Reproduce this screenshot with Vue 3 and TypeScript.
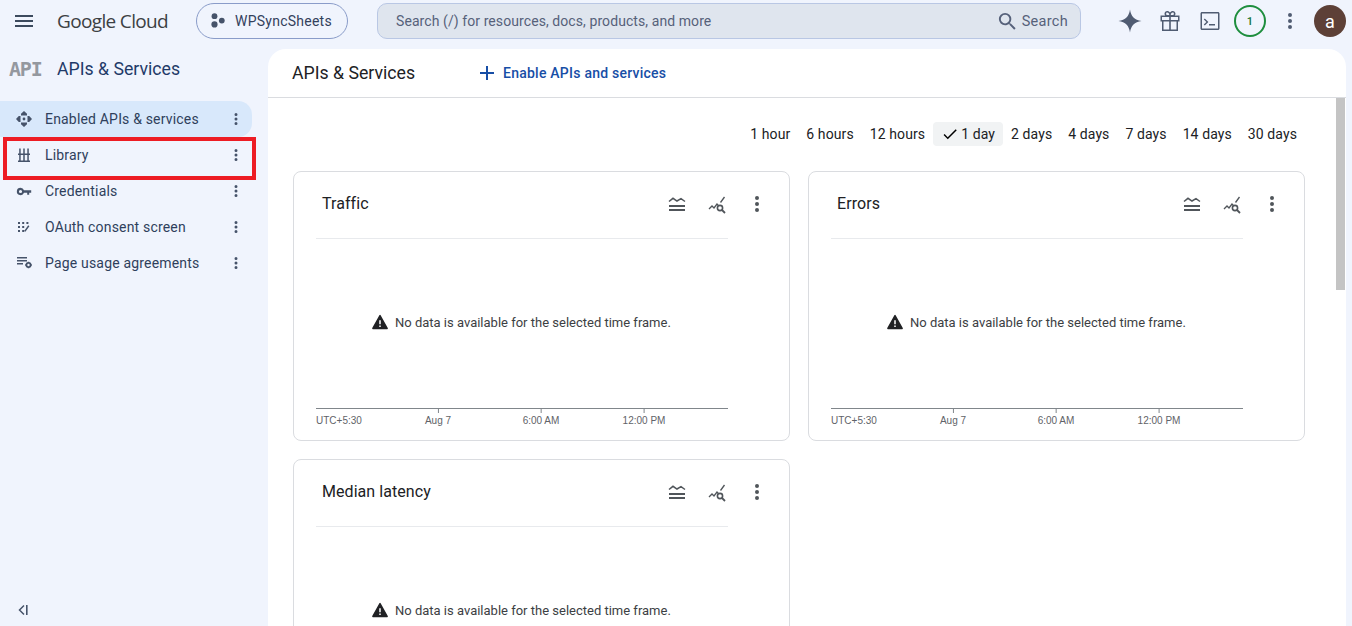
<script setup lang="ts">
const navItems = [
  { label: "Enabled APIs & services", icon: "enabled", active: true },
  { label: "Library", icon: "library", active: false },
  { label: "Credentials", icon: "key", active: false },
  { label: "OAuth consent screen", icon: "oauth", active: false },
  { label: "Page usage agreements", icon: "usage", active: false },
];

const ranges = ["1 hour", "6 hours", "12 hours", "1 day", "2 days", "4 days", "7 days", "14 days", "30 days"];
// the third card's axis sits below the fold, so it has none here
const charts = [
  { title: "Traffic", axis: true },
  { title: "Errors", axis: true },
  { title: "Median latency", axis: false },
];
const ticks = [
  { label: "Aug 7", left: 122 },
  { label: "6:00 AM", left: 225 },
  { label: "12:00 PM", left: 328 },
];
</script>

<template>
  <div class="page">
    <header class="topbar">
      <svg class="menu" width="24" height="24" viewBox="0 0 24 24"><path d="M3 18h18v-2H3zm0-5h18v-2H3zm0-7v2h18V6z" /></svg>
      <span class="logo">Google Cloud</span>
      <button class="project">
        <svg width="16" height="16" viewBox="0 0 16 16"><circle cx="4.5" cy="3.2" r="2.9" /><circle cx="11.8" cy="7.6" r="2.9" /><circle cx="4.5" cy="11.4" r="3.1" /></svg>
        WPSyncSheets
      </button>
      <div class="search">
        <span class="placeholder">Search (/) for resources, docs, products, and more</span>
        <svg width="23" height="23" viewBox="0 0 24 24"><path d="M15.5 14h-.79l-.28-.27A6.47 6.47 0 0 0 16 9.5 6.5 6.5 0 1 0 9.5 16c1.61 0 3.09-.59 4.23-1.57l.27.28v.79l5 4.99L20.49 19l-4.99-5zm-6 0C7.01 14 5 11.99 5 9.5S7.01 5 9.5 5 14 7.01 14 9.5 11.99 14 9.5 14z" /></svg>
        <span class="search-label">Search</span>
      </div>
      <div class="actions">
        <svg class="spark" width="26" height="26" viewBox="0 0 26 26"><path d="M13 1.500C14 8.500 17.500 12 24.500 13 17.500 14 14 17.500 13 24.500 12 17.500 8.500 14 1.500 13 8.500 12 12 8.500 13 1.500z" /></svg>
        <svg width="24" height="24" viewBox="0 0 24 24"><path d="M20 6.500h-3.200c.4-.5.7-1.100.7-1.800C17.500 3.200 16.300 2 14.700 2c-1.100 0-2 .6-2.700 1.500C11.300 2.600 10.400 2 9.300 2 7.700 2 6.500 3.200 6.500 4.700c0 .7.300 1.300.7 1.800H2.500v6H4V22h16v-9.500h1.500v-6zm-5.300-3c.7 0 1.200.6 1.200 1.200 0 .7-.5 1.300-1.200 1.300h-1.900v-.4c0-1 .9-2.100 1.900-2.100zM8.100 4.700c0-.6.500-1.200 1.200-1.200 1 0 1.900 1.100 1.900 2.100V6H9.300c-.7 0-1.200-.6-1.200-1.300zM4 8h7.200v3H4zm1.500 12.500v-8h5.700v8zm13 0h-5.700v-8h5.700zm1.500-9.500h-7.200V8H20z" /></svg>
        <svg width="24" height="24" viewBox="0 0 24 24"><path d="M20 3H4c-.8 0-1.500.7-1.500 1.500v15c0 .8.700 1.500 1.500 1.500h16c.8 0 1.500-.7 1.500-1.500v-15C21.500 3.700 20.800 3 20 3zm0 16.500H4v-15h16zM6.800 16.500l-1-1L8.400 13 5.800 10.500l1-1 3.600 3.500zM11 15h6v1.500h-6z" /></svg>
        <span class="badge">1</span>
        <svg class="more" width="24" height="24" viewBox="0 0 24 24"><path d="M12 8a2 2 0 1 0 0-4 2 2 0 0 0 0 4zm0 2a2 2 0 1 0 0 4 2 2 0 0 0 0-4zm0 6a2 2 0 1 0 0 4 2 2 0 0 0 0-4z" /></svg>
        <span class="avatar">a</span>
      </div>
    </header>

    <div class="body">
      <aside class="sidebar">
        <div class="side-title">
          <span class="api-mark">API</span>
          <span>APIs &amp; Services</span>
        </div>
        <nav class="nav">
          <div v-for="item in navItems" :key="item.label" class="nav-item" :class="{ active: item.active }">
            <svg class="nav-icon" width="18" height="18" viewBox="0 0 18 18">
              <template v-if="item.icon === 'enabled'">
                <path d="M9 1l3 2.800v1.700H6V3.800zM9 17l-3-2.800v-1.700h6v1.700zM1 9l2.800-3h1.700v6H3.800zM17 9l-2.800 3h-1.700V6h1.700z" />
                <circle cx="9" cy="9" r="1.400" />
              </template>
              <template v-else-if="item.icon === 'library'">
                <path d="M4.200 2.500h1.500v5H4.200zM8.250 2.500h1.500v5h-1.500zM12.300 2.500h1.500v5h-1.500zM4.200 9h1.500v5.500H4.200zM8.250 9h1.500v5.500h-1.500zM12.300 9h1.500v5.500h-1.500zM3 7.500h12V9H3zM3 14.500h12V16H3z" />
              </template>
              <template v-else-if="item.icon === 'key'">
                <path d="M5.500 5.800a3.700 3.700 0 1 0 3.500 5h3.200v2h2v-2h2V8.300H9a3.700 3.700 0 0 0-3.500-2.500zm0 2.100a1.600 1.600 0 1 1 0 3.200 1.600 1.600 0 0 1 0-3.200z" />
              </template>
              <template v-else-if="item.icon === 'oauth'">
                <path d="M3 4h2v2H3zM7.200 4h2v2h-2zM11.400 4h2v2h-2zM3 8h2v2H3zM7.200 8h2v2h-2zM3 12h2v2H3zM7.200 12h2v2h-2zM10.400 13.800l4-5.600-1.200-.9-4 5.600z" />
              </template>
              <template v-else>
                <path d="M2 3h10v1.400H2zM2 6h10v1.400H2zM2 9h6v1.400H2z" />
                <circle cx="13.500" cy="11" r="2.100" fill="none" stroke="currentColor" stroke-width="1.800" />
                <path d="M12.800 7.700h1.400v1.400h-1.400zM12.800 12.900h1.400v1.400h-1.400zM10.200 10.300h1.400v1.400h-1.400zM15.400 10.300h1.400v1.400h-1.400z" />
              </template>
            </svg>
            <span class="nav-label">{{ item.label }}</span>
            <svg class="nav-more" width="18" height="18" viewBox="0 0 24 24"><path d="M12 8a2 2 0 1 0 0-4 2 2 0 0 0 0 4zm0 2a2 2 0 1 0 0 4 2 2 0 0 0 0-4zm0 6a2 2 0 1 0 0 4 2 2 0 0 0 0-4z" /></svg>
          </div>
          <div class="highlight"></div>
        </nav>
        <svg class="collapse" width="14" height="14" viewBox="0 0 14 14"><path d="M8 2.500 3.500 7 8 11.500" fill="none" stroke="currentColor" stroke-width="1.500" /><path d="M10 2h1.600v10H10z" /></svg>
      </aside>

      <main class="panel">
        <div class="panel-head">
          <h1>APIs &amp; Services</h1>
          <button class="enable">
            <svg width="18" height="18" viewBox="0 0 18 18"><path d="M8 2h2v6h6v2h-6v6H8v-6H2V8h6z" /></svg>
            Enable APIs and services
          </button>
        </div>
        <div class="panel-scroll">
          <div class="content">
            <div class="ranges">
              <span v-for="r in ranges" :key="r" class="range" :class="{ selected: r === '1 day' }">
                <svg v-if="r === '1 day'" width="18" height="18" viewBox="0 0 24 24"><path d="M9 16.200 4.800 12l-1.400 1.400L9 19 21 7l-1.400-1.400z" /></svg>
                {{ r }}
              </span>
            </div>
            <div class="grid">
              <section v-for="c in charts" :key="c.title" class="card">
                <div class="card-head">
                  <h2>{{ c.title }}</h2>
                  <div class="card-actions">
                    <svg width="24" height="24" viewBox="0 0 24 24"><path d="M4 13h16v2H4zM4 17h16v2H4z" /><path d="M4 9.500 8 6.300l4 2.700 4-2.300 4 2.800" fill="none" stroke="currentColor" stroke-width="1.500" /></svg>
                    <svg width="24" height="24" viewBox="0 0 24 24"><path d="M4 17l3-3 2 2 3-4 1.200 1.200M15.500 10.500l4-5.500" fill="none" stroke="currentColor" stroke-width="1.300" /><circle cx="15" cy="16" r="2.600" fill="none" stroke="currentColor" stroke-width="1.600" /><path d="m17 18 3 3" stroke="currentColor" stroke-width="1.800" /></svg>
                    <svg width="24" height="24" viewBox="0 0 24 24"><path d="M12 8a2 2 0 1 0 0-4 2 2 0 0 0 0 4zm0 2a2 2 0 1 0 0 4 2 2 0 0 0 0-4zm0 6a2 2 0 1 0 0 4 2 2 0 0 0 0-4z" /></svg>
                  </div>
                </div>
                <div class="chart">
                  <div class="empty">
                    <svg width="18" height="18" viewBox="0 0 24 24"><path d="M12 3.500 2.500 20.500h19z" stroke="#202124" stroke-width="2" stroke-linejoin="round" /><path d="M11 9.500h2V15h-2zM11 16.500h2v2h-2z" fill="#fff" /></svg>
                    No data is available for the selected time frame.
                  </div>
                  <div v-if="c.axis" class="axis">
                    <span class="zone">UTC+5:30</span>
                    <span v-for="t in ticks" :key="t.label" class="tick" :style="{ left: t.left + 'px' }">{{ t.label }}</span>
                  </div>
                </div>
              </section>
            </div>
          </div>
          <div class="scrollbar"><div class="thumb"></div></div>
        </div>
      </main>
    </div>
  </div>
</template>

<style>
html, body {
  margin: 0;
  height: 100%;
  overflow: hidden;
  background: #f0f4fd;
}
</style>

<style scoped>
.page {
  width: 1352px;
  height: 626px;
  overflow: hidden;
  background: #f0f4fd;
  font-family: Roboto, "Liberation Sans", sans-serif;
  color: #1f2937;
  display: flex;
  flex-direction: column;
}

.topbar {
  height: 49px;
  flex: none;
  display: flex;
  align-items: center;
  box-sizing: border-box;
}

.menu {
  margin-left: 12px;
  margin-bottom: 7px;
  fill: #3c4a5e;
}

.logo {
  margin-left: 21px;
  margin-bottom: 8px;
  width: 139px;
  font-size: 19px;
  letter-spacing: -0.65px;
  color: #3c4043;
  font-family: "Open Sans", Roboto, sans-serif;
}

.project {
  width: 152px;
  height: 36px;
  box-sizing: border-box;
  display: flex;
  align-items: center;
  gap: 9px;
  padding: 0 0 0 13px;
  margin-bottom: 7px;
  border: 1px solid #8a9cc9;
  border-radius: 18px;
  background: transparent;
  color: #33415c;
  font: 14px Roboto, sans-serif;
  letter-spacing: 0.25px;
}

.project svg {
  fill: #46536a;
}

.search {
  margin-left: 29px;
  margin-bottom: 7px;
  width: 704px;
  height: 36px;
  box-sizing: border-box;
  display: flex;
  align-items: center;
  padding: 0 12px 0 18px;
  background: #dfe5ee;
  border: 1px solid #b9c7e4;
  border-radius: 10px;
  color: #56617a;
  font-size: 14px;
  letter-spacing: 0.08px;
}

.placeholder {
  flex: 1;
}

.search svg {
  fill: #56617a;
  margin-right: 3px;
}

.search-label {
  font-size: 14.5px;
  letter-spacing: 0.3px;
}

.actions {
  flex: 1;
  position: relative;
  height: 49px;
  display: flex;
  align-items: center;
  margin-bottom: 7px;
  padding-left: 36px;
  gap: 16px;
}

.actions svg {
  fill: #505c72;
  flex: none;
}

.actions .spark {
  margin-right: -1px;
}

.badge {
  width: 32px;
  height: 32px;
  box-sizing: border-box;
  border: 2px solid #1e8e3e;
  border-radius: 50%;
  display: flex;
  align-items: center;
  justify-content: center;
  font-size: 11px;
  font-weight: 500;
  color: #137333;
  margin-left: -4px;
}

.actions .more {
  margin-left: -4px;
}

.avatar {
  width: 32px;
  height: 32px;
  border-radius: 50%;
  background: #5d4037;
  color: #fff;
  font-size: 18px;
  display: flex;
  align-items: center;
  justify-content: center;
  margin-left: -4px;
}

.body {
  flex: 1;
  display: flex;
  min-height: 0;
}

.sidebar {
  width: 268px;
  flex: none;
  position: relative;
}

.side-title {
  height: 52px;
  box-sizing: border-box;
  padding: 0 0 12px 8px;
  display: flex;
  align-items: center;
  gap: 15px;
  font-size: 17.7px;
  color: #1f3a68;
}

.api-mark {
  width: 34px;
  font: bold 20px "DejaVu Sans Mono", monospace;
  letter-spacing: -1.200px;
  padding-left: 1px;
  box-sizing: border-box;
  color: #94989f;
}

.nav {
  position: relative;
}

.nav-item {
  width: 252px;
  height: 36px;
  display: flex;
  align-items: center;
  box-sizing: border-box;
  padding-left: 15px;
  font-size: 14px;
  letter-spacing: 0.18px;
  color: #2f3f5c;
  border-radius: 0 14px 14px 0;
}

.nav-item.active {
  background: #d8e8fb;
}

.nav-icon {
  fill: #46536a;
  color: #46536a;
  flex: none;
}

.nav-label {
  flex: 1;
  margin-left: 12px;
}

.nav-more {
  fill: #46536a;
  margin-right: 7px;
}

.highlight {
  position: absolute;
  left: 3px;
  top: 36px;
  width: 253px;
  height: 43px;
  box-sizing: border-box;
  border: 4px solid #ed1c24;
  pointer-events: none;
}

.collapse {
  position: absolute;
  left: 16px;
  bottom: 9px;
  fill: #46536a;
  color: #46536a;
}

.panel {
  width: 1078px;
  flex: none;
  background: #fff;
  border-radius: 18px 18px 0 0;
  display: flex;
  flex-direction: column;
  min-height: 0;
}

.panel-head {
  height: 49px;
  flex: none;
  box-sizing: border-box;
  border-bottom: 1px solid #dadce0;
  display: flex;
  align-items: center;
  padding: 0 0 0 24px;
}

.panel-head h1 {
  margin: 0;
  font-size: 17.7px;
  font-weight: 400;
  color: #202124;
  width: 186px;
}

.enable {
  display: flex;
  align-items: center;
  gap: 7px;
  padding: 0;
  border: 0;
  background: none;
  color: #174ea6;
  font: 500 14px Roboto, sans-serif;
  letter-spacing: 0.24px;
}

.enable svg {
  fill: #174ea6;
}

.panel-scroll {
  flex: 1;
  display: flex;
  min-height: 0;
  overflow: hidden;
}

.content {
  flex: 1;
  padding: 0 31px 0 25px;
  min-width: 0;
}

.ranges {
  height: 73px;
  box-sizing: border-box;
  padding-top: 24px;
  display: flex;
  justify-content: flex-end;
  align-items: flex-start;
}

.range {
  height: 24px;
  display: flex;
  align-items: center;
  padding: 0 8px;
  font-size: 14px;
  letter-spacing: 0.1px;
  color: #202124;
  border-radius: 4px;
}

.range.selected {
  background: #f1f3f4;
  gap: 2px;
}

.grid {
  display: grid;
  grid-template-columns: 497px 497px;
  gap: 18px;
}

.card {
  height: 270px;
  box-sizing: border-box;
  border: 1px solid #dadce0;
  border-radius: 8px;
  padding: 0 61px 0 22px;
  display: flex;
  flex-direction: column;
}

.card-head {
  height: 67px;
  flex: none;
  box-sizing: border-box;
  border-bottom: 1px solid #e8eaed;
  display: flex;
  align-items: center;
  padding: 0 0 4px 6px;
  position: relative;
}

.card-head h2 {
  margin: 0;
  font-size: 16px;
  font-weight: 400;
  color: #202124;
  letter-spacing: 0.06px;
}

.card-actions {
  display: flex;
  gap: 16px;
  position: absolute;
  left: 349px;
  top: 20px;
  color: #50555a;
  fill: #50555a;
}

.chart {
  flex: 1;
  position: relative;
}

.empty {
  position: absolute;
  left: 55px;
  top: 74px;
  display: flex;
  align-items: center;
  gap: 6px;
  font-size: 13px;
  color: #3c4043;
  white-space: nowrap;
}

.empty svg {
  fill: #202124;
}

.axis {
  position: absolute;
  left: 0;
  right: 0;
  top: 169px;
  border-top: 1px solid #80868b;
  font: 10px "Liberation Sans", sans-serif;
  color: #5f6368;
}

.zone {
  position: absolute;
  left: 0;
  top: 6px;
}

.tick {
  position: absolute;
  top: 6px;
  transform: translateX(-50%);
  white-space: nowrap;
}

.tick::before {
  content: "";
  position: absolute;
  left: 50%;
  top: -6px;
  width: 1px;
  height: 4px;
  background: #80868b;
}

.scrollbar {
  width: 10px;
  flex: none;
}

.thumb {
  width: 9px;
  height: 192px;
  background: #c4c4c4;
}
</style>
